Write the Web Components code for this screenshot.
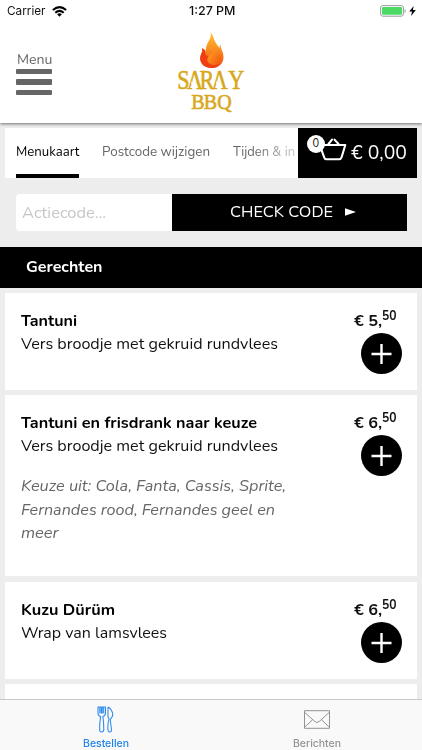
<!DOCTYPE html>
<html lang="nl">
<head>
<meta charset="utf-8">
<title>Saray BBQ</title>
<style>
html,body{margin:0;height:100%;overflow:hidden}
body{font-family:Nunito,Lato,"Open Sans",sans-serif;background:#ededed;color:#111}
</style>
</head>
<body>
<order-app></order-app>
<script>
const define=(name,html,setup)=>customElements.define(name,class extends HTMLElement{
  connectedCallback(){
    if(this.shadowRoot)return;
    const t=document.createElement('template');
    t.innerHTML=html;
    this.attachShadow({mode:'open'}).append(t.content.cloneNode(true));
    if(setup)setup(this,this.shadowRoot);
  }
});

// One line of text whose glyphs are scaled horizontally to fill the width in "w".
define('fit-text',`<style>:host{display:block;white-space:nowrap}span{display:inline-block;transform-origin:0 50%}</style><span><slot></slot></span>`,(el,root)=>{
  const s=root.querySelector('span'),w=+el.getAttribute('w');
  el.style.width=w+'px';
  s.style.transform='scaleX('+w/s.getBoundingClientRect().width+')';
});

define('status-bar',`<style>
:host{display:grid;grid-template-columns:1fr auto 1fr;align-items:center;height:22px;padding:0 6px 0 7px;font-family:Inter,sans-serif;font-size:12px;line-height:22px;color:#111}
.l,.r{display:flex;align-items:center}.l{gap:6px}.r{justify-content:flex-end;gap:3px}
.c{font-weight:550;padding-left:2px}svg{display:block}
</style>
<div class="l"><fit-text w="38.5">Carrier</fit-text><svg width="15" height="11" viewBox="0 0 15 11"><g fill="none" stroke="#000" stroke-width="2"><path d="M.9 4.1Q7.5-1.9 14.1 4.1"/><path d="M3.3 6.7Q7.5 3 11.7 6.7"/></g><path d="M5.1 8.3Q7.5 6.4 9.9 8.3L7.5 10.8Z"/></svg></div>
<fit-text class="c" w="46.5">1:27 PM</fit-text>
<div class="r"><svg width="26" height="12" viewBox="0 0 26 12"><rect x=".6" y=".6" width="22.8" height="10.6" rx="2.2" fill="#fff" stroke="#999"/><rect x="2" y="2" width="20" height="7.8" rx="1" fill="#4cd964"/><path d="M24.6 4v4q1.2-.8 1.2-2t-1.2-2" fill="#999"/></svg><svg width="7" height="10" viewBox="0 0 7 10"><path d="M4.7 0L.2 5.6H3L2.1 10 6.8 4.1H3.9Z"/></svg></div>`);

define('saray-logo',`<style>:host{display:block;width:70px;height:82px}svg{display:block;overflow:visible}text{font-family:"Liberation Serif",serif;fill:#d8a81c;stroke:#d8a81c;stroke-width:.6}</style>
<svg width="70" height="82" viewBox="175 32 70 82">
<defs><linearGradient id="f" x1="0" y1="0" x2="0" y2="1"><stop offset="0" stop-color="#ffc033"/><stop offset=".4" stop-color="#fb9822"/><stop offset="1" stop-color="#f24a12"/></linearGradient><linearGradient id="g" x1="0" y1="0" x2="1" y2="1"><stop offset="0" stop-color="#ffad25"/><stop offset="1" stop-color="#f4510f"/></linearGradient></defs>
<path d="M209.5 32.5C211 37 208 40 206.2 44C204.6 47.5 205 50 204.2 51.5C203.8 49.6 202.6 48.7 200.9 48.2C202.5 51.5 199 54.5 199.2 58.8C199.5 64.5 204.5 68 210.5 68C217.5 68 222.5 63.5 222.5 57.2C222.5 51.5 220 50 219.4 44.5C218.5 46 218.3 47 218.5 48.3C217 46 215 43.5 213.5 40.5C212.3 38 212.2 34.8 209.5 32.5Z" fill="url(#f)"/>
<path d="M200.9 48.2C202.5 51.5 199 54.5 199.2 58.8C199.5 64.5 204.5 68 210.5 68C215 68 218 66 219.3 63C216 66 211 65.5 208.5 63C205.5 60 207 57.7 209.5 56.2C206 56.7 203.5 55 204.2 51.5C203.8 49.6 202.6 48.7 200.9 48.2Z" fill="#ee3e12"/>
<path d="M212.6 47.8C213.7 51 211.2 53.5 208.7 55.2C205.6 57.3 205.5 61.5 208.4 63.5C211.5 65.8 216.8 65.3 219 61.5C221.5 57.2 218.5 54.2 216.2 52.5C214.7 51.3 213.2 49.8 212.6 47.8Z" fill="url(#g)"/>
<g transform="translate(175 0) scale(.82 1)"><text y="89" font-size="27" x="1.5 13.3 28.8 43.6 63.6">SARAY</text></g>
<path d="M190.3 81.5h5.1v2.4h-5.1ZM215.2 81.5h5.1v2.4h-5.1Z" fill="#fff"/>
<g transform="translate(190.2 0) scale(.93 1)"><text y="108.8" font-size="21.5" x="0 13.4 28">BBQ</text></g>
</svg>`);

define('menu-button',`<style>:host{display:block;width:36px;color:#666}fit-text{font-size:14.8px;line-height:18px;padding-left:.5px}
.b{display:grid;gap:5px;margin-top:1.2px}.b i{display:block;height:5.2px;background:#666;border-radius:1px}</style>
<fit-text w="35.5">Menu</fit-text><div class="b"><i></i><i></i><i></i></div>`);

define('app-header',`<style>:host{display:block;box-sizing:border-box;height:123px;background:#fff;box-shadow:0 1px 3px #0008;position:relative}
.row{display:grid;grid-template-columns:1fr 70px 1fr;padding:10px 17px 0 16px;height:91px}menu-button{padding-top:18px}</style>
<status-bar></status-bar><div class="row"><menu-button></menu-button><saray-logo></saray-logo></div>`);

define('nav-tabs',`<style>
:host{display:flex;box-sizing:border-box;height:50px;flex:1;min-width:0;overflow:hidden;background:#fff;padding-left:10.5px;gap:23px;font-size:14.4px;line-height:47px;color:#666}
.on{color:#000;box-sizing:border-box;height:50px;border-bottom:4px solid #000}
.fade{-webkit-mask-image:linear-gradient(90deg,#000 20px,#0005 62px,transparent 75px);mask-image:linear-gradient(90deg,#000 20px,#0005 62px,transparent 75px)}</style>
<fit-text class="on" w="63.5">Menukaart</fit-text><fit-text w="108">Postcode wijzigen</fit-text><fit-text class="fade" w="62">Tijden &amp; in</fit-text>`);

define('cart-button',`<style>
:host{display:flex;align-items:center;box-sizing:border-box;width:119px;height:50px;background:#000;color:#fff;font-size:20px;line-height:51px;padding-left:8px;gap:4px}
.i{position:relative;width:41px;height:34px}.i svg{position:absolute;left:10px;top:0}
b{position:absolute;left:1px;top:-1px;width:18.5px;height:18.5px;border-radius:50%;background:#fff;color:#111;font:400 11px/18.5px Nunito,Lato,sans-serif;text-align:center}
</style><div class="i"><svg width="31" height="26" viewBox="0 0 31 26" fill="none" stroke="#fff" stroke-linejoin="round" stroke-linecap="round"><path stroke-width="2.1" d="M5 9H29.3L25.6 21.2Q25 23.2 23 23.2H10.5Q8.7 23.2 8.1 21.2L5 12.5M12.5 8L16 3.6M18.5 3.6L22.5 8"/></svg><b>0</b></div><fit-text w="56">€ 0,00</fit-text>`);

define('coupon-form',`<style>
:host{display:grid;grid-template-columns:156.5px 234.5px;height:37px}
.in{background:#fff;border-radius:4px 0 0 4px;padding-left:6.5px;color:#c6c6c6;font-size:16.8px;line-height:37px}
.go{display:flex;align-items:center;gap:12px;background:#000;color:#fff;font-size:16.6px;line-height:36px;padding-left:58px}
svg{display:block}</style>
<div class="in"><fit-text w="84">Actiecode...</fit-text></div><div class="go"><fit-text w="103">CHECK CODE</fit-text><svg width="11" height="8" viewBox="0 0 11 8"><path d="M0 .3L11 4 0 7.7Z" fill="#fff"/></svg></div>`);

define('section-title',`<style>:host{display:block;height:40.5px;line-height:40px;background:#000;color:#fff;font-size:16.5px;font-weight:700;padding-left:26px}</style><slot></slot>`);

define('add-button',`<style>:host{display:block;width:41px;height:41px}svg{display:block}</style>
<svg width="41" height="41" viewBox="0 0 41 41"><circle cx="20.5" cy="20.5" r="20.5"/><path d="M10.5 21h20M20.5 11v20" stroke="#fff" stroke-width="2.4"/></svg>`);

define('dish-card',`<style>
:host{display:flex;justify-content:space-between;box-sizing:border-box;min-height:97px;background:#fff;padding:16px 15px 0 15.7px;font-size:16.6px;line-height:23.4px}
.side{display:flex;flex-direction:column;align-items:flex-end;width:66px;flex:none}
.p{display:flex;width:48px;height:24px;font-weight:700}.p fit-text+fit-text{font-size:13.2px;line-height:14px;margin-left:.5px}
.opt{padding-top:16.5px}
</style>
<div><slot name="name"></slot><slot name="text"></slot><div class="o"><slot name="opt"></slot></div></div>
<div class="side"><div class="p"></div><add-button></add-button></div>`,(el,root)=>{
  const [a,b]=el.getAttribute('price').split(',');
  root.querySelector('.p').innerHTML='<fit-text w="28">€ '+a+',</fit-text><fit-text w="14.5">'+b+'</fit-text>';
  if(el.querySelector('[slot=opt]'))root.querySelector('.o').classList.add('opt');
});

define('tab-item',`<style>:host{display:flex;flex-direction:column;align-items:center;flex:1;font-family:Inter,sans-serif;font-size:10.2px;font-weight:500;line-height:12px;color:#929292;padding-top:6px}
:host([active]){color:#1f83ea}.i{height:26px;display:flex;align-items:center;margin-bottom:4.5px}</style><div class="i"><slot name="icon"></slot></div><slot></slot>`);

define('tab-bar',`<style>:host{display:flex;box-sizing:border-box;height:51px;background:#f9f9f9;border-top:1px solid #c9c9c9}svg{display:block}</style>
<tab-item active><svg slot="icon" width="17" height="27" viewBox="0 0 17 27" fill="none" stroke="#2b89ec" stroke-width="1.05" stroke-linejoin="round" stroke-linecap="round"><path d="M1 1V7Q1 9.7 3.6 10.6Q2.6 17 2.6 23.5Q2.7 26 4.7 26Q6.7 26 6.8 23.5Q6.8 17 5.9 10.6Q8.5 9.7 8.5 7V1L6.7 1V7M6.7 1H5.2V7M4.2 7V1H2.8V7M2.8 1H1M11 1.2V11Q12.6 13 11.5 15Q10.6 19 10.9 23.5Q11.2 26 12.7 26Q14.8 26 14.4 23L13.3 14Q13.3 12.8 14.4 11.8Q16.6 9.5 15.2 6Q13.6 1.8 11 1.2Z"/></svg><fit-text w="46">Bestellen</fit-text></tab-item>
<tab-item><svg slot="icon" width="26" height="19" viewBox="0 0 26 19" fill="none" stroke="#929292"><path d="M.5.7H25.5V18.3H.5ZM.8 2.5L10.7 11.4Q13 13.6 15.3 11.4L25.2 2.5M.8 17L8.6 9.7M25.2 17L17.4 9.7"/></svg><fit-text w="48">Berichten</fit-text></tab-item>`);

define('order-app',`<style>
:host{display:grid;grid-template-rows:1fr 51px;height:750px;width:422px;background:#ededed;overflow:hidden}
main{min-height:0;overflow:hidden}
.top{display:flex;margin:4.5px 5.5px 0 5px;gap:0}
coupon-form{margin:16px 0 16.5px 15.5px}
.list{display:grid;gap:5.4px;padding:5px 5.5px 0 5px}
.tall{height:181.5px}
.n{font-weight:700;color:#000}.d{color:#111}.o{color:#666;font-style:italic;padding-left:.5px}
.next{background:#fff;height:60px}
</style>
<main><app-header></app-header>
<div class="top"><nav-tabs></nav-tabs><cart-button></cart-button></div>
<coupon-form></coupon-form>
<section-title><fit-text w="76.5">Gerechten</fit-text></section-title>
<div class="list">
<dish-card price="5,50"><fit-text slot="name" class="n" w="56">Tantuni</fit-text><fit-text slot="text" class="d" w="257">Vers broodje met gekruid rundvlees</fit-text></dish-card>
<dish-card price="6,50" class="tall"><fit-text slot="name" class="n" w="236">Tantuni en frisdrank naar keuze</fit-text><fit-text slot="text" class="d" w="257">Vers broodje met gekruid rundvlees</fit-text><fit-text slot="opt" class="o" w="265">Keuze uit: Cola, Fanta, Cassis, Sprite,</fit-text><fit-text slot="opt" class="o" w="254">Fernandes rood, Fernandes geel en</fit-text><fit-text slot="opt" class="o" w="37.5">meer</fit-text></dish-card>
<dish-card price="6,50"><fit-text slot="name" class="n" w="94">Kuzu Dürüm</fit-text><fit-text slot="text" class="d" w="146">Wrap van lamsvlees</fit-text></dish-card>
<div class="next"></div>
</div></main>
<tab-bar></tab-bar>`);
</script>
</body>
</html>
